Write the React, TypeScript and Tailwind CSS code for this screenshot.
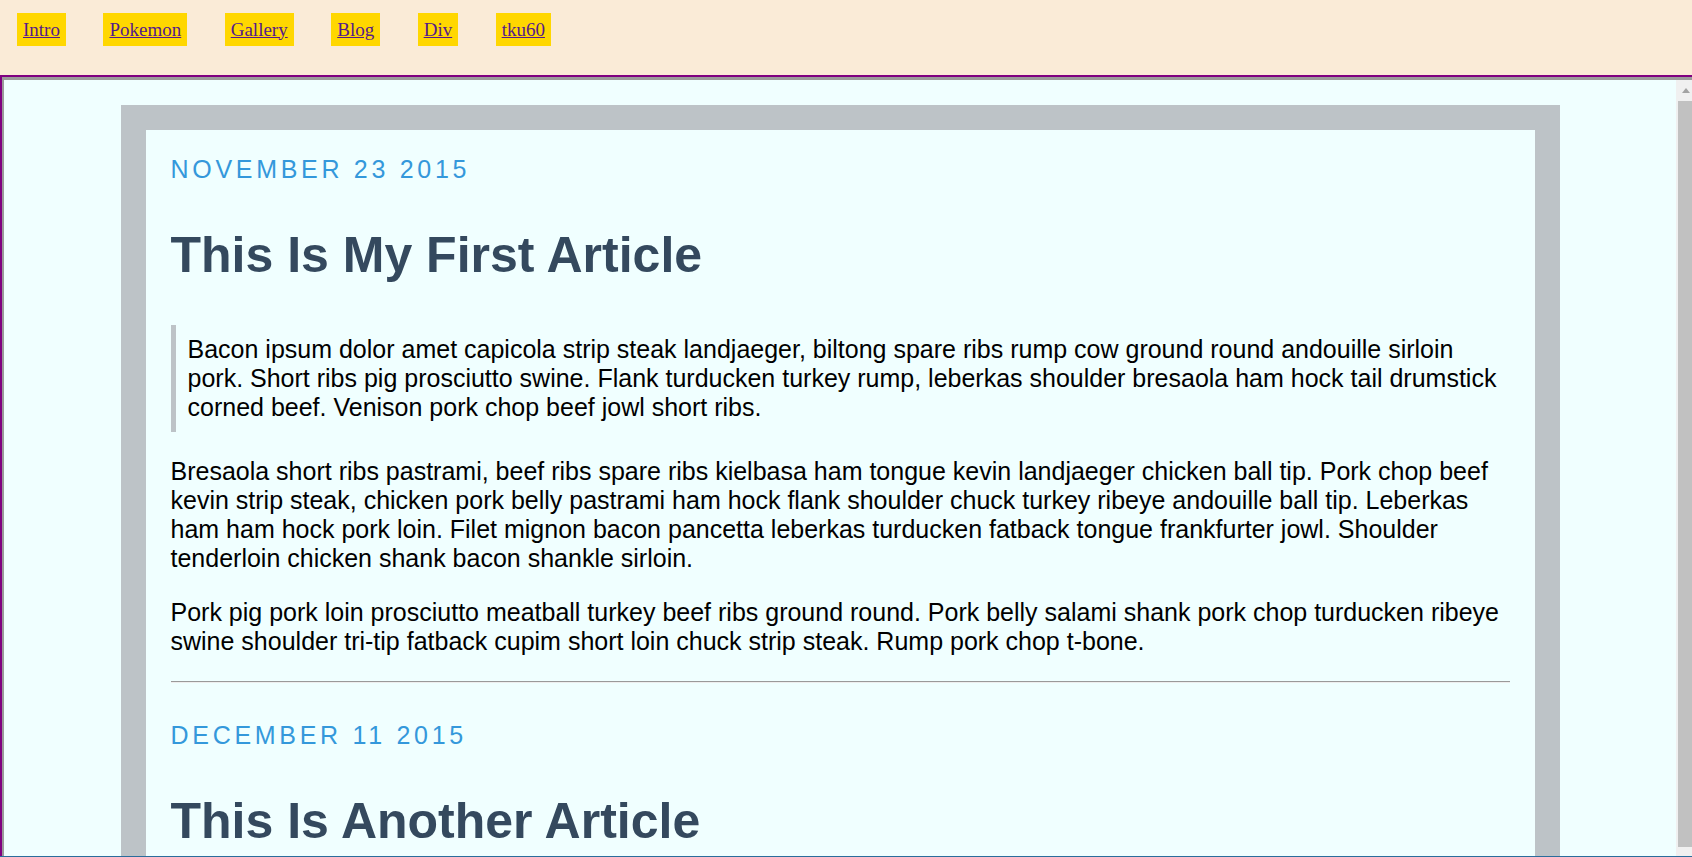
const links = ["Intro", "Pokemon", "Gallery", "Blog", "Div", "tku60"];

const Nav = () => (
  <nav className="h-[75px] shrink-0 flex items-start gap-[37.5px] pl-[17px] pt-[13px] font-['Liberation_Serif','Times_New_Roman',serif]">
    {links.map((l) => (
      <a
        key={l}
        href="#"
        className="bg-[#ffd700] px-[6px] py-[5.5px] text-[19px] leading-[normal] text-[#551a8b] underline"
      >
        {l}
      </a>
    ))}
  </nav>
);

const Scrollbar = () => (
  <div className="w-[16px] shrink-0 bg-[#f0f0f0] flex flex-col">
    <div className="h-[21px] flex items-center justify-center pl-[3px]">
      <svg width="8" height="5" viewBox="0 0 8 5">
        <path d="M4 0 L8 5 L0 5 Z" fill="#a3a3a3" />
      </svg>
    </div>
    <div className="ml-[2px] h-[746px] bg-[#c1c1c1]" />
  </div>
);

interface Post {
  date: string;
  title: string;
  quote: string;
  paras: string[];
}

const posts: Post[] = [
  {
    date: "November 23 2015",
    title: "This Is My First Article",
    quote:
      "Bacon ipsum dolor amet capicola strip steak landjaeger, biltong spare ribs rump cow ground round andouille sirloin pork. Short ribs pig prosciutto swine. Flank turducken turkey rump, leberkas shoulder bresaola ham hock tail drumstick corned beef. Venison pork chop beef jowl short ribs.",
    paras: [
      "Bresaola short ribs pastrami, beef ribs spare ribs kielbasa ham tongue kevin landjaeger chicken ball tip. Pork chop beef kevin strip steak, chicken pork belly pastrami ham hock flank shoulder chuck turkey ribeye andouille ball tip. Leberkas ham ham hock pork loin. Filet mignon bacon pancetta leberkas turducken fatback tongue frankfurter jowl. Shoulder tenderloin chicken shank bacon shankle sirloin.",
      "Pork pig pork loin prosciutto meatball turkey beef ribs ground round. Pork belly salami shank pork chop turducken ribeye swine shoulder tri-tip fatback cupim short loin chuck strip steak. Rump pork chop t-bone.",
    ],
  },
  {
    date: "December 11 2015",
    title: "This Is Another Article",
    quote:
      "Jerky pork belly kevin, shank ribeye short loin chuck tri-tip pancetta. Brisket beef ribs salami capicola, boudin swine pork chop.",
    paras: [
      "Tongue ham hock turducken, biltong chuck sausage pastrami short ribs. Drumstick andouille jowl prosciutto beef ribs.",
    ],
  },
];

const Article = ({ post, first }: { post: Post; first: boolean }) => (
  <article className={first ? "" : "mt-[38px]"}>
    <div className="text-[#3498db] uppercase tracking-[3.7px]">{post.date}</div>
    <h1 className="mt-[42px] mb-[41px] text-[50px] font-bold text-[#34495e]">
      {post.title}
    </h1>
    <blockquote className="border-l-[5px] border-[#bdc3c7] pl-[12px] py-[10px] mb-[25px]">
      {post.quote}
    </blockquote>
    {post.paras.map((p, i) => (
      <p key={i} className="mb-[25px]">
        {p}
      </p>
    ))}
    <div className="mt-[25px] h-[2px] border-t border-t-[#9a9a9a] bg-[#eeeeee]" />
  </article>
);

export default function App() {
  return (
    <div className="h-[857px] w-full overflow-hidden flex flex-col bg-[#faebd7]">
      <Nav />
      <div className="flex-1 min-h-0 flex border-l-2 border-t-2 border-[#800080]">
        <div className="flex-1 min-w-0 flex border-l-2 border-t-[3px] border-[#9a9a9a] bg-[#f0ffff]">
          <div className="w-[1672px] shrink-0 overflow-hidden pt-[25px] flex justify-center">
            <div className="w-[1439px] shrink-0 self-start bg-[#bdc3c7] p-[25px]">
              <div className="bg-[#f0ffff] p-[25px] font-['Liberation_Sans',Arial,sans-serif] text-[25px] leading-[normal] text-black">
                {posts.map((p, i) => (
                  <Article key={i} post={p} first={i === 0} />
                ))}
              </div>
            </div>
          </div>
          <Scrollbar />
        </div>
      </div>
      <div className="h-px shrink-0 bg-[#2a6d9c]" />
    </div>
  );
}
